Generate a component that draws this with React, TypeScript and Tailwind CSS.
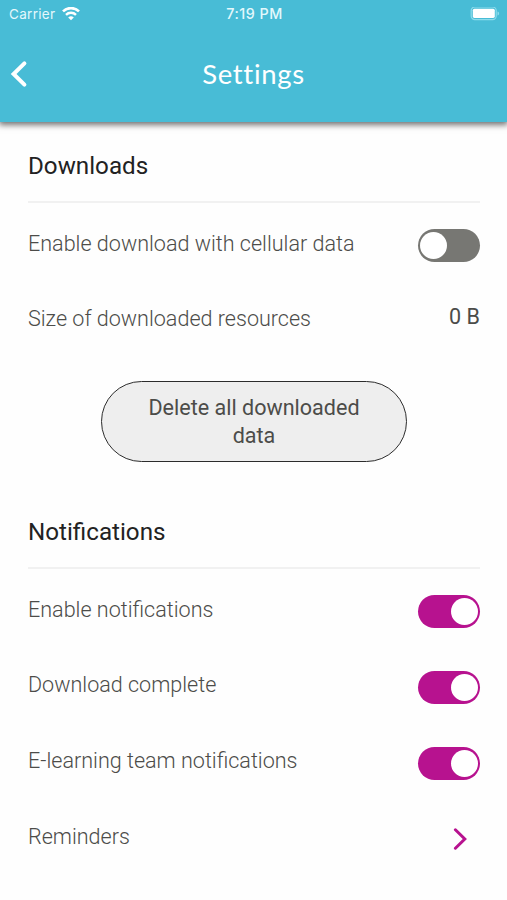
import { useState } from 'react';

interface ToggleProps {
    label: string;
    checked: boolean;
    onChange: () => void;
}

function StatusBar() {
    return (
        <div className="flex h-7 items-center justify-between pl-[9px] pr-[7px] font-['Inter',sans-serif] text-[13.5px] text-[#e4f8fc]">
            <div className="flex flex-1 items-center gap-[6px]">
                <span className="w-[47px] tracking-[0.3px]">Carrier</span>
                <svg className="h-[14px] w-[18px]" viewBox="0 0 18 14" fill="none" stroke="white">
                    <path d="M1 4.4a11.3 11.3 0 0 1 16 0" strokeWidth={2.6} />
                    <path d="M4 7.8a7.1 7.1 0 0 1 10 0" strokeWidth={2.4} />
                    <path d="M9 13.2 6.2 10.5a4 4 0 0 1 5.6 0Z" fill="white" stroke="none" />
                </svg>
            </div>
            <span className="text-[14.3px] font-medium tracking-[0.5px]">7:19 PM</span>
            <div className="flex flex-1 justify-end">
                <svg className="h-[14px] w-[30px]" viewBox="0 0 30 14">
                    <rect x="1.2" y="0" width="25" height="12.6" rx="3.6" fill="none" stroke="#8cdcec" strokeWidth="1.2" />
                    <rect x="2.8" y="1.7" width="22" height="9.2" rx="1.6" fill="white" />
                    <path d="M27.5 4.5v4c1-.3 1.6-1.1 1.6-2s-.6-1.7-1.6-2Z" fill="#8cdcec" />
                </svg>
            </div>
        </div>
    );
}

function SectionTitle({ children }: { children: string }) {
    return (
        <h2 className="h-[56px] border-b-2 border-[#f1f1f1] text-[24.2px] leading-[38px] text-[#222222]">
            {children}
        </h2>
    );
}

function ToggleRow({ label, checked, onChange }: ToggleProps) {
    return (
        <div className="flex h-[75.6px] items-center justify-between">
            <span className="pb-[4px] font-light">{label}</span>
            <button
                role="switch"
                aria-checked={checked}
                aria-label={label}
                onClick={onChange}
                className={`flex h-[33px] w-[62.5px] items-center rounded-full px-[2.5px] ${checked ? 'justify-end bg-[#b7128f]' : 'justify-start bg-[#777773]'}`}
            >
                <span className="h-[27px] w-[27px] rounded-full bg-white" />
            </button>
        </div>
    );
}

export default function App() {
    const [cellular, setCellular] = useState(false);
    const [notifications, setNotifications] = useState(true);
    const [downloadComplete, setDownloadComplete] = useState(true);
    const [teamNotifications, setTeamNotifications] = useState(true);

    return (
        <div className="h-[900px] w-full overflow-hidden bg-[#fefefe] font-['Roboto',sans-serif] text-[21.55px] text-[#4c4c49]">
            <header className="h-[122px] bg-[#48bcd6] shadow-[0_2px_6px_1px_rgba(0,0,0,0.55)]">
                <StatusBar />
                <div className="flex h-[92px] items-center">
                    <button aria-label="Back" className="w-[60px] pl-[10px]">
                        <svg className="h-7 w-[18px]" viewBox="0 0 18 28" fill="none" stroke="white" strokeWidth={4}>
                            <path d="M14.4 3.4 3.6 14l10.8 10.6" strokeLinecap="round" />
                        </svg>
                    </button>
                    <h1 className="flex-1 text-center font-['Lato',sans-serif] text-[27.5px] tracking-[0.7px] text-white">
                        Settings
                    </h1>
                    <div className="w-[60px]" />
                </div>
            </header>

            <main className="pl-7 pr-[27px]">
                <section className="pt-[25px]">
                    <SectionTitle>Downloads</SectionTitle>
                    <div className="pt-[5px]">
                        <ToggleRow
                            label="Enable download with cellular data"
                            checked={cellular}
                            onChange={() => setCellular(!cellular)}
                        />
                        <div className="flex h-[75.6px] items-center justify-between">
                            <span className="pb-[5px] font-light">Size of downloaded resources</span>
                            <span className="pb-[8px]">0 B</span>
                        </div>
                    </div>
                    <div className="flex justify-center pt-[22px]">
                        <button className="h-[81px] w-[306px] rounded-full border-[1.5px] border-[#2c2c2c] bg-[#eeeeee] px-10 pt-px leading-[28.5px]">
                            Delete all downloaded data
                        </button>
                    </div>
                </section>

                <section className="pt-[51px]">
                    <SectionTitle>Notifications</SectionTitle>
                    <div className="pt-[5px]">
                        <ToggleRow
                            label="Enable notifications"
                            checked={notifications}
                            onChange={() => setNotifications(!notifications)}
                        />
                        <ToggleRow
                            label="Download complete"
                            checked={downloadComplete}
                            onChange={() => setDownloadComplete(!downloadComplete)}
                        />
                        <ToggleRow
                            label="E-learning team notifications"
                            checked={teamNotifications}
                            onChange={() => setTeamNotifications(!teamNotifications)}
                        />
                        <div className="flex h-[75.6px] items-center justify-between pr-[13px]">
                            <span className="pb-[4px] font-light">Reminders</span>
                            <svg className="h-[22px] w-[14px]" viewBox="0 0 14 22" fill="none" stroke="#b7128f" strokeWidth={3}>
                                <path d="M2.4 1.8 11.8 11 2.4 20.2" strokeLinecap="round" />
                            </svg>
                        </div>
                    </div>
                </section>
            </main>
        </div>
    );
}
